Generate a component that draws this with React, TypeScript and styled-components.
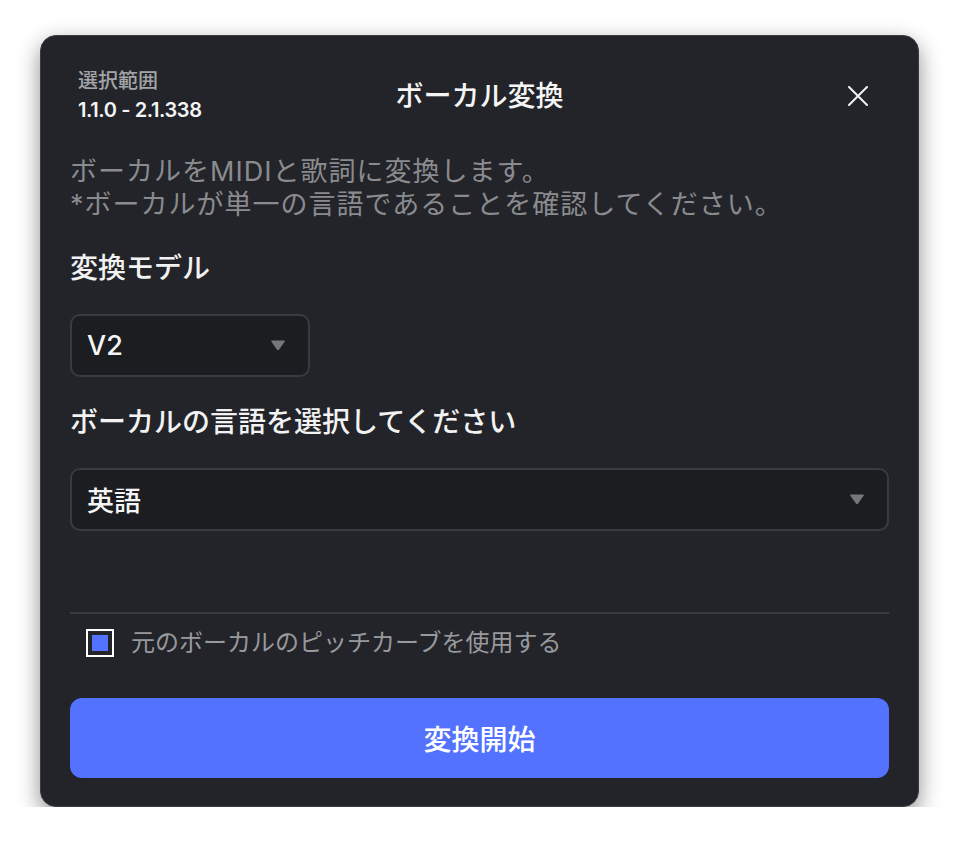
import React from "react";
import styled, { createGlobalStyle } from "styled-components";

const Global = createGlobalStyle`
  html, body { margin: 0; padding: 0; background: #ffffff; }
  body { font-family: Inter, "Noto Sans CJK JP", sans-serif; }
  * { box-sizing: border-box; }
`;

const Page = styled.div`
  padding: 35px 0 0 40px;
`;

const Dialog = styled.div`
  width: 879px;
  background: #222429;
  border: 1px solid #3a3c42;
  border-radius: 16px;
  box-shadow: 0 8px 22px rgba(0, 0, 0, 0.45);
  padding: 0 29px 28px;
  display: flex;
  flex-direction: column;
`;

const Header = styled.div`
  display: grid;
  grid-template-columns: 1fr auto 1fr;
  align-items: center;
  padding-top: 31px;
`;

const Range = styled.div`
  padding-left: 8px;
  display: flex;
  flex-direction: column;
`;

const RangeLabel = styled.div`
  font-size: 20px;
  line-height: 28px;
  color: #a3a4a8;
  font-weight: 500;
`;

const RangeValue = styled.div`
  font-size: 20px;
  line-height: 30px;
  color: #f4f4f5;
  font-weight: 600;
  letter-spacing: -0.4px;
`;

const Title = styled.div`
  font-size: 28px;
  font-weight: 500;
  color: #f5f5f6;
  line-height: 40px;
`;

const CloseButton = styled.button`
  justify-self: end;
  margin-right: 21px;
  width: 20px;
  height: 20px;
  padding: 0;
  border: none;
  background: transparent;
  display: flex;
  align-items: center;
  justify-content: center;
  cursor: pointer;
`;

const Description = styled.p`
  margin: 30px 0 0;
  font-size: 27px;
  line-height: 33px;
  letter-spacing: 1px;
  color: #8a8b8e;
`;

const Label = styled.div<{ $top: number }>`
  margin-top: ${(p) => p.$top}px;
  font-size: 28px;
  line-height: 40px;
  font-weight: 500;
  color: #f2f2f3;
`;

const Select = styled.div<{ $width?: string }>`
  margin-top: 26px;
  width: ${(p) => p.$width ?? "100%"};
  height: 63px;
  background: #1c1d21;
  border: 2px solid #393b42;
  border-radius: 10px;
  display: flex;
  align-items: center;
  justify-content: space-between;
  padding: 0 22px 0 15px;
`;

const SelectValue = styled.span`
  font-size: 27px;
  font-weight: 500;
  color: #f5f5f6;
`;

const Divider = styled.div`
  margin-top: 81px;
  height: 2px;
  background: #393b42;
`;

const CheckRow = styled.label`
  margin-top: 14px;
  padding-left: 16px;
  display: flex;
  align-items: center;
  gap: 17px;
  cursor: pointer;
`;

const CheckBox = styled.span`
  width: 28px;
  height: 28px;
  border: 2px solid #ffffff;
  padding: 4px;
  display: flex;
`;

const CheckFill = styled.span`
  flex: 1;
  background: #5372ff;
`;

const CheckLabel = styled.span`
  font-size: 24px;
  line-height: 30px;
  color: #98999c;
`;

const StartButton = styled.button`
  margin-top: 40px;
  height: 80px;
  width: 100%;
  border: none;
  border-radius: 12px;
  background: #5372ff;
  color: #ffffff;
  font-family: inherit;
  font-size: 28px;
  font-weight: 500;
  cursor: pointer;
`;

const Arrow = () => (
  <svg width="16" height="13" viewBox="0 0 16 13">
    <path d="M2 1.5 H14 Q15.5 1.5 14.6 2.8 L9.1 10.6 Q8 12 6.9 10.6 L1.4 2.8 Q0.5 1.5 2 1.5 Z" fill="#76777a" />
  </svg>
);

export default function App() {
  return (
    <>
      <Global />
      <Page>
        <Dialog>
          <Header>
            <Range>
              <RangeLabel>選択範囲</RangeLabel>
              <RangeValue>1.1.0 - 2.1.338</RangeValue>
            </Range>
            <Title>ボーカル変換</Title>
            <CloseButton aria-label="閉じる">
              <svg width="20" height="20" viewBox="0 0 20 20">
                <path d="M1 1 L19 19 M19 1 L1 19" stroke="#f2f2f3" strokeWidth="2" strokeLinecap="round" />
              </svg>
            </CloseButton>
          </Header>
          <Description>
            ボーカルをMIDIと歌詞に変換します。
            <br />
            *ボーカルが単一の言語であることを確認してください。
          </Description>
          <Label $top={27}>変換モデル</Label>
          <Select $width="240px">
            <SelectValue>V2</SelectValue>
            <Arrow />
          </Select>
          <Label $top={25}>ボーカルの言語を選択してください</Label>
          <Select>
            <SelectValue>英語</SelectValue>
            <Arrow />
          </Select>
          <Divider />
          <CheckRow>
            <CheckBox>
              <CheckFill />
            </CheckBox>
            <CheckLabel>元のボーカルのピッチカーブを使用する</CheckLabel>
          </CheckRow>
          <StartButton>変換開始</StartButton>
        </Dialog>
      </Page>
    </>
  );
}
